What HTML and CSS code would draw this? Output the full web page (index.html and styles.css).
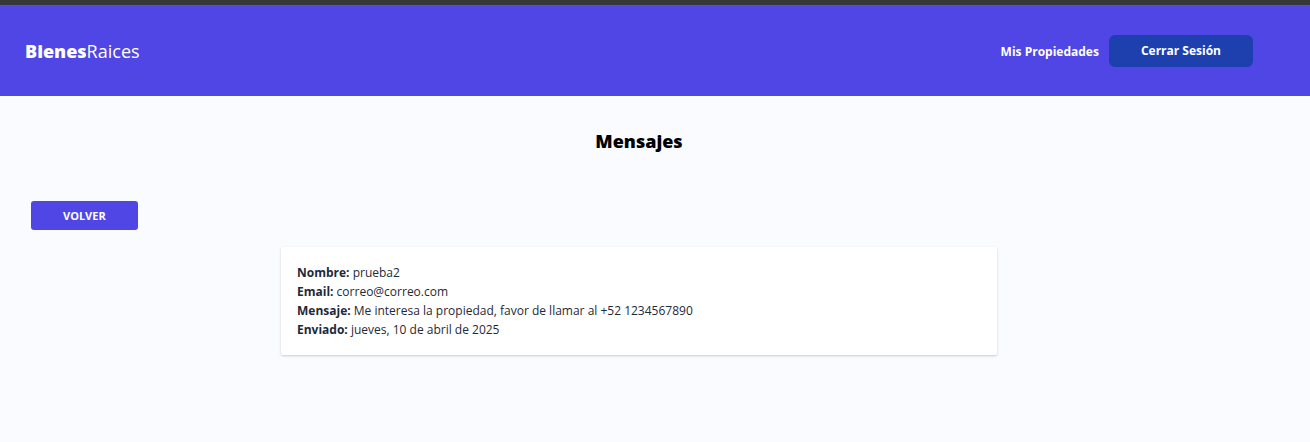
FILE: index.html
```html
<!DOCTYPE html>
<html lang="es">
<head>
  <meta charset="utf-8">
  <meta name="viewport" content="width=device-width, initial-scale=1">
  <title>BienesRaices - Mensajes</title>
  <link rel="stylesheet" href="styles.css">
</head>
<body>
  <header class="header">
    <div class="container header-row">
      <a class="brand" href="#"><span class="brand-strong">Bienes</span>Raices</a>
      <nav class="nav">
        <a class="nav-link" href="#">Mis Propiedades</a>
        <button class="logout" type="button">Cerrar Sesión</button>
      </nav>
    </div>
  </header>
  <main class="container main">
    <h1 class="title">Mensajes</h1>
    <a class="back" href="#">Volver</a>
    <article class="card">
      <p class="line"><strong class="label">Nombre:</strong> prueba2</p>
      <p class="line"><strong class="label">Email:</strong> correo@correo.com</p>
      <p class="line"><strong class="label">Mensaje:</strong> Me interesa la propiedad, favor de llamar al +52 1234567890</p>
      <p class="line"><strong class="label">Enviado:</strong> jueves, 10 de abril de 2025</p>
    </article>
  </main>
</body>
</html>
```
FILE: styles.css
```css
* {
  box-sizing: border-box;
}

body {
  margin: 0;
  min-height: 100vh;
  border-top: 5px solid #373737;
  background: #fafbfe;
  color: #1f2937;
  font-family: "Segoe UI", "Open Sans", "Noto Sans", sans-serif;
  font-size: 12px;
  line-height: 19px;
}

.container {
  max-width: 1253px;
  padding-left: 25px;
}

.header {
  padding: 29px 0;
  border-top: 1px solid #5c55b0;
  background: #4f46e5;
}

.header-row {
  display: flex;
  align-items: center;
  justify-content: space-between;
}

.brand {
  color: #fff;
  font-size: 18px;
  font-weight: 400;
  line-height: 26px;
  text-decoration: none;
}

.brand-strong {
  font-weight: 800;
}

.nav {
  display: flex;
  align-items: center;
  gap: 10px;
}

.nav-link {
  color: #fff;
  font-weight: 700;
  text-decoration: none;
}

.logout {
  padding: 6px 32px;
  border: 0;
  border-radius: 6px;
  background: #1e40af;
  color: #fff;
  font: inherit;
  font-weight: 700;
  line-height: 20px;
}

.title {
  margin: 32px 0 46px;
  color: #000;
  font-size: 18px;
  font-weight: 800;
  line-height: 27px;
  text-align: center;
}

.back {
  display: inline-block;
  margin-left: 6px;
  padding: 6px 32px;
  border-radius: 3px;
  background: #4f46e5;
  color: #fff;
  font-size: 11px;
  font-weight: 700;
  line-height: 17px;
  text-decoration: none;
  text-transform: uppercase;
  vertical-align: top;
}

.card {
  max-width: 716px;
  margin: 17px auto 0;
  padding: 16px;
  border-radius: 2px;
  background: #fff;
  box-shadow: 0 1px 3px rgba(0, 0, 0, 0.1), 0 1px 2px rgba(0, 0, 0, 0.1);
}

.line {
  margin: 0;
}
```
